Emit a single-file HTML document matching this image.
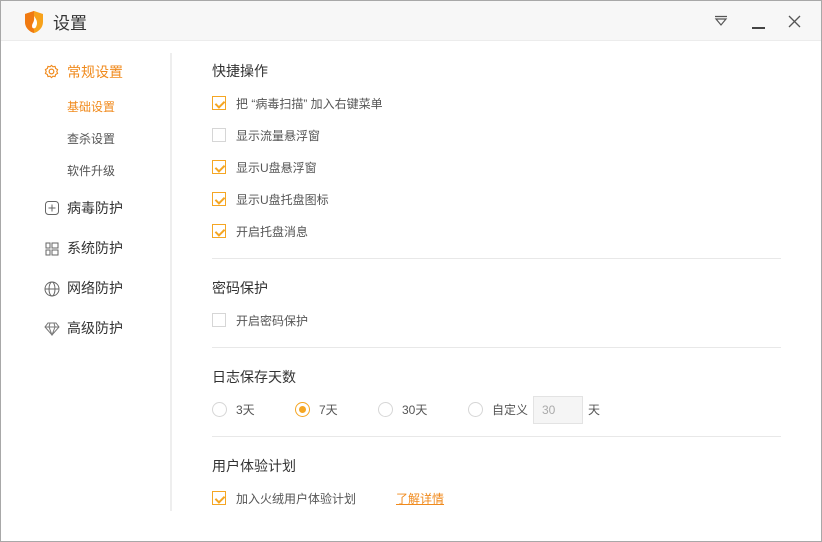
<!DOCTYPE html>
<html><head><meta charset="utf-8"><style>
*{margin:0;padding:0;box-sizing:border-box}
body{width:822px;height:542px;overflow:hidden;background:#fff;font-family:"Liberation Sans","Noto Sans CJK SC",sans-serif;position:relative}
.win{position:absolute;left:0;top:0;width:822px;height:542px;border:1px solid #a8a8a8;background:#fff}
.tb{position:absolute;left:0;top:0;width:820px;height:40px;background:#f7f7f7;border-bottom:1px solid #ececec}
.a{position:absolute;white-space:nowrap}
.t{font-size:12px;color:#555}
.h{font-size:14px;color:#333}
.nav{font-size:14px;color:#333}
.cb{position:absolute;width:14px;height:14px;border:1px solid #d6d6d6;background:#fff}
.cb.on{border-color:#f5a623}
.cb.on::after{content:"";position:absolute;left:3.5px;top:1.5px;width:4px;height:7px;border:solid #f5a623;border-width:0 2px 2px 0;transform:rotate(45deg)}
.hr{position:absolute;left:211px;width:569px;height:1px;background:#e8e8e8}
.rd{position:absolute;width:15px;height:15px;border:1px solid #d6d6d6;border-radius:50%}
.rd.on{border-color:#f5a623}
.rd.on::after{content:"";position:absolute;left:3px;top:3px;width:7px;height:7px;border-radius:50%;background:#f5a623}
</style></head><body>
<div class="win">
<div class="tb">
<svg class="a" style="left:23px;top:9px" width="20" height="24" viewBox="0 0 20 24"><path d="M10 1 L19 4 V12 C19 18 14 22 10 23 C6 22 1 18 1 12 V4Z" fill="#f7a21b"/><path d="M10 1 L1 4 V12 C1 18 6 22 10 23Z" fill="#f07a12"/><path d="M10 6 C13 10 14 13 12 17 C11 19 8 19 8 16 C8 13 11 12 10 6Z" fill="#fff"/></svg>
<div class="a" style="left:52px;top:8px;font-size:17px;color:#333">设置</div>
<svg class="a" style="left:713px;top:14px" width="14" height="12"><path d="M1 1.5H13M2 4L7 10L12 4Z" stroke="#555" fill="none" stroke-width="1.2"/></svg>
<div class="a" style="left:751px;top:26px;width:13px;height:1.5px;background:#444"></div>
<svg class="a" style="left:787px;top:14px" width="13" height="13"><path d="M1 1L12 12M12 1L1 12" stroke="#555" stroke-width="1.3"/></svg>
</div>
<div class="a" style="left:169px;top:52px;width:2px;height:458px;background:#eee"></div>
<svg class="a" style="left:43px;top:63px" width="15" height="15" viewBox="0 0 16 16"><circle cx="8" cy="8" r="2.5" fill="none" stroke="#f08a1c" stroke-width="1.3"/><path d="M8 1.5L9.5 3L11.8 2.6L12.4 4.8L14.5 6L13.6 8L14.5 10L12.4 11.2L11.8 13.4L9.5 13L8 14.5L6.5 13L4.2 13.4L3.6 11.2L1.5 10L2.4 8L1.5 6L3.6 4.8L4.2 2.6L6.5 3Z" fill="none" stroke="#f08a1c" stroke-width="1.2"/></svg>
<div class="a nav" style="left:66px;top:61px;color:#f08a1c">常规设置</div>
<div class="a t" style="left:66px;top:97px;color:#f08a1c">基础设置</div>
<div class="a t" style="left:66px;top:129px">查杀设置</div>
<div class="a t" style="left:66px;top:161px">软件升级</div>
<svg class="a" style="left:44px;top:200px" width="14" height="14"><rect x="0.5" y="0.5" width="13" height="13" rx="3" fill="none" stroke="#666"/><path d="M7 3.5V10.5M3.5 7H10.5" stroke="#666"/></svg>
<div class="a nav" style="left:66px;top:197px">病毒防护</div>
<svg class="a" style="left:44px;top:241px" width="14" height="14"><path d="M1 1H5V6H1ZM1 8H5V13H1ZM7 1H13V6H7ZM7 8H13V13H7Z" fill="none" stroke="#666"/></svg>
<div class="a nav" style="left:66px;top:237px">系统防护</div>
<svg class="a" style="left:43px;top:280px" width="16" height="16"><circle cx="8" cy="8" r="7" fill="none" stroke="#666"/><ellipse cx="8" cy="8" rx="3" ry="7" fill="none" stroke="#666"/><path d="M1 8H15" stroke="#666"/></svg>
<div class="a nav" style="left:66px;top:277px">网络防护</div>
<svg class="a" style="left:43px;top:321px" width="16" height="14"><path d="M4 1H12L15 5L8 13L1 5ZM1 5H15M6 1L5 5L8 13L11 5L10 1" fill="none" stroke="#777"/></svg>
<div class="a nav" style="left:66px;top:317px">高级防护</div>

<div class="a h" style="left:211px;top:60px">快捷操作</div>
<div class="cb on" style="left:211px;top:95px"></div><div class="a t" style="left:235px;top:94px">把 “病毒扫描” 加入右键菜单</div>
<div class="cb" style="left:211px;top:127px"></div><div class="a t" style="left:235px;top:126px">显示流量悬浮窗</div>
<div class="cb on" style="left:211px;top:159px"></div><div class="a t" style="left:235px;top:158px">显示U盘悬浮窗</div>
<div class="cb on" style="left:211px;top:191px"></div><div class="a t" style="left:235px;top:190px">显示U盘托盘图标</div>
<div class="cb on" style="left:211px;top:223px"></div><div class="a t" style="left:235px;top:222px">开启托盘消息</div>
<div class="hr" style="top:257px"></div>
<div class="a h" style="left:211px;top:277px">密码保护</div>
<div class="cb" style="left:211px;top:312px"></div><div class="a t" style="left:235px;top:311px">开启密码保护</div>
<div class="hr" style="top:346px"></div>
<div class="a h" style="left:211px;top:366px">日志保存天数</div>
<div class="rd" style="left:211px;top:401px"></div><div class="a t" style="left:235px;top:400px">3天</div>
<div class="rd on" style="left:294px;top:401px"></div><div class="a t" style="left:318px;top:400px">7天</div>
<div class="rd" style="left:377px;top:401px"></div><div class="a t" style="left:401px;top:400px">30天</div>
<div class="rd" style="left:467px;top:401px"></div><div class="a t" style="left:491px;top:400px">自定义</div>
<div class="a" style="left:532px;top:395px;width:50px;height:28px;background:#f5f5f5;border:1px solid #e3e3e3;font-size:12px;color:#aaa;padding:6px 0 0 8px">30</div>
<div class="a t" style="left:587px;top:400px">天</div>
<div class="hr" style="top:435px"></div>
<div class="a h" style="left:211px;top:455px">用户体验计划</div>
<div class="cb on" style="left:211px;top:490px"></div><div class="a t" style="left:235px;top:489px">加入火绒用户体验计划</div>
<div class="a t" style="left:395px;top:489px;color:#f08a1c;text-decoration:underline">了解详情</div>
</div>
</body></html>
